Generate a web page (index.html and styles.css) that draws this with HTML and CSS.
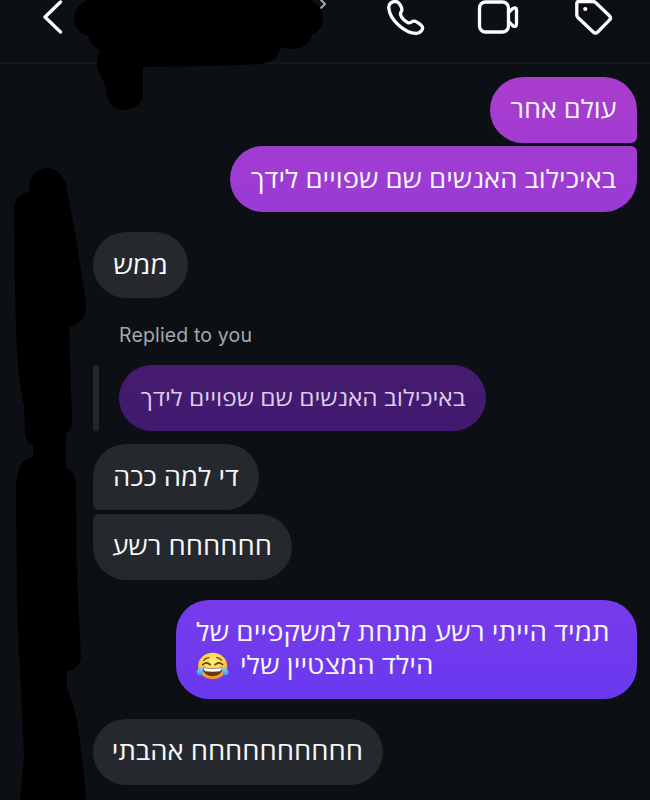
FILE: index.html
```html
<!DOCTYPE html>
<html lang="he">
<head>
<meta charset="utf-8">
<title>Chat</title>
<link rel="stylesheet" href="styles.css">
</head>
<body>
<div class="screen">
  <header class="header">
    <svg class="icon back" viewBox="0 0 26 40"><path d="M18.5 2 3 17 18.5 32"/></svg>
    <svg class="icon more" viewBox="0 0 10 40"><path d="M2 0 6 4 2 8"/></svg>
    <svg class="icon phone" viewBox="0 0 44 40"><path d="M10.5 1.4C6.5 1.5 3.3 4 3.8 8.2 4.8 20 20 33.6 31.5 33.4 35 33.3 38.5 29.5 37.4 26.8 36.5 24.5 31.5 21.6 29.3 21.2 26.8 20.8 25.2 23.8 23 22.7 19.5 21 16.5 17.6 15.5 14.5 15 12 17.5 11.5 16.8 8.7 16.2 6 13.5 1.4 10.5 1.4Z"/></svg>
    <svg class="icon video" viewBox="0 0 44 40"><rect x="3.5" y="2" width="29" height="30" rx="6"/><path d="M32.5 12.5 36.2 9C38.5 7 40.5 7.8 40.5 10V24C40.5 26.6 38.5 27.3 36.2 25.2L32.5 21.5"/></svg>
    <svg class="icon tag" viewBox="0 0 44 40"><path d="M6.8 1.5H20.5Q22.6 1.5 24 2.9L37.4 15.8Q39.6 18 37.4 20.2L25.7 32Q23.4 34.2 21.2 32L5.6 17.2Q4.8 16.3 4.8 15V3.5Q4.8 1.5 6.8 1.5Z"/><circle class="dot" cx="13.3" cy="9" r="2.1"/></svg>
  </header>
  <main class="thread">
    <div class="bubble sent joined-below m1"><p class="text">עולם אחר</p></div>
    <div class="bubble sent joined-above m2"><p class="text">באיכילוב האנשים שם שפויים לידך</p></div>
    <div class="bubble received m3"><p class="text">ממש</p></div>
    <div class="reply-label">Replied to you</div>
    <div class="reply">
      <span class="reply-bar"></span>
      <div class="bubble quoted"><p class="text">באיכילוב האנשים שם שפויים לידך</p></div>
    </div>
    <div class="bubble received joined-below m4"><p class="text">די למה ככה</p></div>
    <div class="bubble received joined-above m5"><p class="text">חחחחחח רשע</p></div>
    <div class="bubble sent m6">
      <p class="text line-one">תמיד הייתי רשע מתחת למשקפיים של</p>
      <p class="text line-two">הילד המצטיין שלי <svg class="emoji" viewBox="0 0 34 32" role="img" aria-label="😂">
        <defs>
          <radialGradient id="face" cx=".5" cy=".35" r=".65"><stop offset="0" stop-color="#fff27a"/><stop offset=".6" stop-color="#fbd342"/><stop offset="1" stop-color="#e68a20"/></radialGradient>
          <linearGradient id="tear" x2="0" y2="1"><stop offset="0" stop-color="#8fdcff"/><stop offset="1" stop-color="#319be8"/></linearGradient>
        </defs>
        <circle cx="17" cy="16" r="15" fill="url(#face)"/>
        <path class="brow" d="M8 9.5Q9.5 7 13 6.5M21 6.5Q24.5 7 26 9.5"/>
        <path class="eye" d="M7 14.5Q10.5 10.5 14.5 14.5M19.5 14.5Q23.5 10.5 27 14.5"/>
        <path d="M6.5 17.5Q17 19.5 27.5 17.5C27.5 24 23 27.5 17 27.5S6.5 24 6.5 17.5Z" fill="#6b3513"/>
        <path d="M7.5 18.3Q17 20 26.5 18.3Q26 21.5 24.5 22Q17 23 9.5 22Q8 21.5 7.5 18.3Z" fill="#fff"/>
        <path d="M7.2 17C3 18 .5 21 .8 23.5 1.2 27.5 6 27.5 6.8 23.8 7.3 21.5 7.2 19 7.2 17ZM26.8 17C31 18 33.5 21 33.2 23.5 32.8 27.5 28 27.5 27.2 23.8 26.7 21.5 26.8 19 26.8 17Z" fill="url(#tear)"/>
      </svg></p>
    </div>
    <div class="bubble received m7"><p class="text">חחחחחחחחחח אהבתי</p></div>
  </main>
  <svg class="scribble" viewBox="0 0 650 800">
    <path d="M88 0C77 4 74 12 74 19 75 28 80 34 88 36 90 43 95 48 100 50 98 56 97 59 97 65 98 75 105 79 107 95 108 104 116 110 125 110 136 109 143 102 143 93V67L215 66 260 64C272 63 279 57 280 48L296 49C304 48 310 42 312 35 319 31 323 26 323 18 323 10 319 5 312 0Z"/>
    <path d="M29 192C28 178 36 168 47 168 57 168 64 176 66 185L75 232 86 303C87 317 80 325 69 327L72 420C72 427 70 431 66 434V468C73 471 76 476 76 485L77 580 81 655C81 664 75 670 67 671V689C78 710 83 760 86 800H20L24 755 17 610 16 490C17 468 20 460 33 457V445C27 442 25 437 25 430L24 406C18 380 15 330 15 280L14 210C14 200 20 193 29 192Z"/>
  </svg>
</div>
</body>
</html>
```
FILE: styles.css
```css
* { box-sizing: border-box; }
body { margin: 0; background: #0c1014; }
.screen {
  position: relative;
  width: 650px;
  height: 800px;
  overflow: hidden;
  background: #0c1014;
  color: #f7f7fa;
  font-family: "Open Sans", "Noto Sans", sans-serif;
}
.header {
  display: flex;
  height: 64px;
  border-bottom: 2px solid #15181e;
  padding-left: 42px;
}
.icon {
  flex: none;
  height: 40px;
  fill: none;
  stroke: #fff;
  stroke-width: 3.3;
  stroke-linecap: round;
  stroke-linejoin: round;
}
.back { width: 26px; }
.more { width: 10px; margin-left: 251px; stroke: #a5a8b0; stroke-width: 2; }
.phone { width: 44px; margin-left: 56px; }
.video { width: 44px; margin-left: 47px; }
.tag { width: 44px; margin-left: 52px; }
.tag .dot { fill: #fff; stroke: none; }

.thread {
  display: flex;
  flex-direction: column;
  align-items: flex-start;
  padding: 12.5px 13.5px 0 93px;
}
.bubble {
  flex: none;
  height: 66px;
  padding: 15.5px 20.5px 0 20px;
  border-radius: 33px;
  direction: rtl;
}
.text {
  margin: 0;
  font-size: 25px;
  line-height: 33px;
  white-space: nowrap;
  transform: scaleX(var(--stretch, 1.097));
  transform-origin: right;
}
.sent { align-self: flex-end; }
.received { background: #25282d; }
.sent.joined-below { border-bottom-right-radius: 6px; }
.sent.joined-above { border-top-right-radius: 6px; }
.received.joined-below { border-bottom-left-radius: 6px; }
.received.joined-above { border-top-left-radius: 6px; }

.m1 { --stretch: 1.08; width: 147px; background: linear-gradient(#aa3dcd, #a23bd1); }
.m2 { width: 406.5px; margin-top: 3.5px; background: linear-gradient(#a23cd1, #993ad6); }
.m3 { --stretch: 1.12; width: 95.4px; margin-top: 20px; }
.reply-label {
  height: 26px;
  margin: 24px 0 0 26px;
  color: #a4a8ae;
  font-family: Inter, sans-serif;
  font-size: 19.5px;
  line-height: 26px;
  letter-spacing: .15px;
}
.reply { display: flex; gap: 20px; margin-top: 17px; }
.reply-bar { width: 6.4px; height: 66px; border-radius: 4px; background: #25282d; }
.quoted { --stretch: 1.085; width: 367px; background: linear-gradient(#461b6e, #401a70); color: #dccdea; }
.quoted .text { font-size: 22.5px; }
.m4 { width: 166.4px; margin-top: 13px; }
.m5 { width: 199.4px; margin-top: 3.5px; }
.m6 {
  width: 461px;
  height: 99px;
  margin-top: 20px;
  background: linear-gradient(#783bea, #6939f0);
  text-align: left;
}
.m6 .text { transform-origin: left; --stretch: 1.111; }
.m7 { width: 290.4px; margin-top: 20px; }
.emoji { width: 30px; height: 32px; margin-right: 3px; vertical-align: -8px; }
.brow, .eye { fill: none; stroke: #70400f; stroke-width: 1.5; stroke-linecap: round; }
.eye { stroke-width: 2; }
.emoji { overflow: visible; }

.scribble {
  position: absolute;
  inset: 0;
  width: 650px;
  height: 800px;
  pointer-events: none;
}
```
